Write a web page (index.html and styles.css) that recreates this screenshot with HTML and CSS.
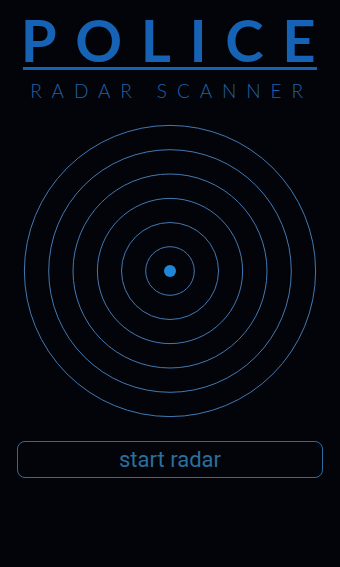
FILE: index.html
```html
<!DOCTYPE html>
<html lang="en">
<head>
    <meta charset="UTF-8">
    <meta name="viewport" content="width=device-width, initial-scale=1.0">
    <link rel="stylesheet" href="styles.css">
    <title>Police Radar Scanner</title>
</head>
<body>
    <div class="app">
        <div class="logo">
            <div class="logo-title">POLICE</div>
            <div class="logo-line"></div>
            <div class="logo-sub">RADAR SCANNER</div>
        </div>

        <div class="radar">
            <svg width="300" height="300" viewBox="0 0 300 300">
                <g fill="none" stroke="#4279b2" stroke-width="1">
                    <circle cx="150" cy="150" r="24.3"/>
                    <circle cx="150" cy="150" r="48.5"/>
                    <circle cx="150" cy="150" r="72.6"/>
                    <circle cx="150" cy="150" r="97"/>
                    <circle cx="150" cy="150" r="121.3"/>
                    <circle cx="150" cy="150" r="145.6"/>
                </g>
                <circle cx="150" cy="150" r="6" fill="#1f86d8"/>
            </svg>
        </div>

        <button class="start-btn">start radar</button>
    </div>
</body>
</html>
```

FILE: styles.css
```css
body {
    margin: 0;
    background: #030409;
}

.app {
    width: 340px;
    height: 567px;
    display: flex;
    flex-direction: column;
    align-items: center;
}

.logo {
    width: 294px;
    padding-top: 13px;
    display: flex;
    flex-direction: column;
    align-items: center;
}

.logo-title {
    font-family: "Lato", sans-serif;
    font-weight: bold;
    font-size: 58px;
    line-height: 54px;
    letter-spacing: 18.6px;
    padding-left: 15px;
    white-space: nowrap;
    color: #1662b4;
}

.logo-line {
    width: 294px;
    height: 3px;
    background: #1662b4;
}

.logo-sub {
    font-family: "Lato", sans-serif;
    font-weight: 300;
    font-size: 19px;
    line-height: 22px;
    letter-spacing: 9.9px;
    padding-left: 3px;
    white-space: nowrap;
    margin-top: 10px;
    color: #2060a8;
}

.radar {
    margin-top: 19px;
    width: 300px;
    height: 300px;
}

.radar svg {
    display: block;
}

.start-btn {
    margin-top: 20px;
    width: 306px;
    height: 37px;
    background: transparent;
    border: 1px solid #2f6a9e;
    border-radius: 8px;
    font-family: "Roboto", sans-serif;
    font-size: 22px;
    color: #2b6e9e;
    padding: 0;
}
```
